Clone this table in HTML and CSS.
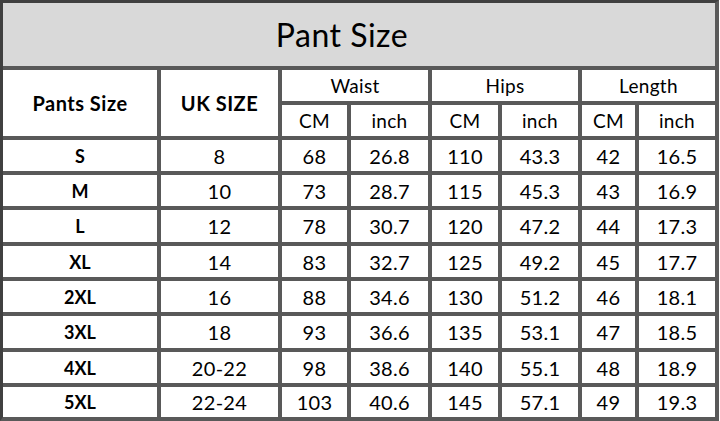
FILE: index.html
```html
<!DOCTYPE html>
<html>
<head>
<meta charset="utf-8">
<link rel="stylesheet" href="styles.css">
</head>
<body>
<div class="sheet">
  <div class="cell title">Pant Size</div>
  <div class="cell hd bold span-r2">Pants Size</div>
  <div class="cell hd bold span-r2">UK SIZE</div>
  <div class="cell hd span-c2">Waist</div>
  <div class="cell hd span-c2">Hips</div>
  <div class="cell hd span-c2">Length</div>
  <div class="cell hd">CM</div><div class="cell hd">inch</div>
  <div class="cell hd">CM</div><div class="cell hd">inch</div>
  <div class="cell hd">CM</div><div class="cell hd">inch</div>

  <div class="cell bold">S</div><div class="cell">8</div><div class="cell">68</div><div class="cell">26.8</div><div class="cell">110</div><div class="cell">43.3</div><div class="cell">42</div><div class="cell">16.5</div>
  <div class="cell bold">M</div><div class="cell">10</div><div class="cell">73</div><div class="cell">28.7</div><div class="cell">115</div><div class="cell">45.3</div><div class="cell">43</div><div class="cell">16.9</div>
  <div class="cell bold">L</div><div class="cell">12</div><div class="cell">78</div><div class="cell">30.7</div><div class="cell">120</div><div class="cell">47.2</div><div class="cell">44</div><div class="cell">17.3</div>
  <div class="cell bold">XL</div><div class="cell">14</div><div class="cell">83</div><div class="cell">32.7</div><div class="cell">125</div><div class="cell">49.2</div><div class="cell">45</div><div class="cell">17.7</div>
  <div class="cell bold">2XL</div><div class="cell">16</div><div class="cell">88</div><div class="cell">34.6</div><div class="cell">130</div><div class="cell">51.2</div><div class="cell">46</div><div class="cell">18.1</div>
  <div class="cell bold">3XL</div><div class="cell">18</div><div class="cell">93</div><div class="cell">36.6</div><div class="cell">135</div><div class="cell">53.1</div><div class="cell">47</div><div class="cell">18.5</div>
  <div class="cell bold">4XL</div><div class="cell">20-22</div><div class="cell">98</div><div class="cell">38.6</div><div class="cell">140</div><div class="cell">55.1</div><div class="cell">48</div><div class="cell">18.9</div>
  <div class="cell bold">5XL</div><div class="cell">22-24</div><div class="cell">103</div><div class="cell">40.6</div><div class="cell">145</div><div class="cell">57.1</div><div class="cell">49</div><div class="cell">19.3</div>
</div>
</body>
</html>
```
FILE: styles.css
```css
html, body {
  margin: 0;
  padding: 0;
  background: #ffffff;
}
.sheet {
  display: grid;
  width: 712px;
  grid-template-columns: 154px 117px 65px 77px 66px 76px 53px 76px;
  grid-template-rows: 63px 31px 31px 31px 31px 32px 31px 31px 32px 31px 30px;
  gap: 4px;
  background: #595959;
  border-top: 3px solid #404040;
  border-left: 3px solid #404040;
  border-right: 4px solid #595959;
  border-bottom: 4px solid #595959;
  font-family: Lato, "Open Sans", sans-serif;
  color: #000;
}
.cell {
  background: #ffffff;
  display: flex;
  align-items: center;
  justify-content: center;
  font-size: 20px;
  letter-spacing: 0.3px;
  line-height: 1;
}
.title {
  grid-column: 1 / -1;
  background: #d9d9d9;
  font-size: 32px;
  letter-spacing: 0.5px;
  padding-right: 34px;
}
.hd {
  font-size: 19px;
}
.bold {
  font-weight: 700;
  font-size: 18px;
  letter-spacing: 0;
}
.hd.bold {
  font-size: 20px;
  letter-spacing: 0.5px;
}
.span-r2 {
  grid-row: span 2;
}
.span-c2 {
  grid-column: span 2;
}
```
